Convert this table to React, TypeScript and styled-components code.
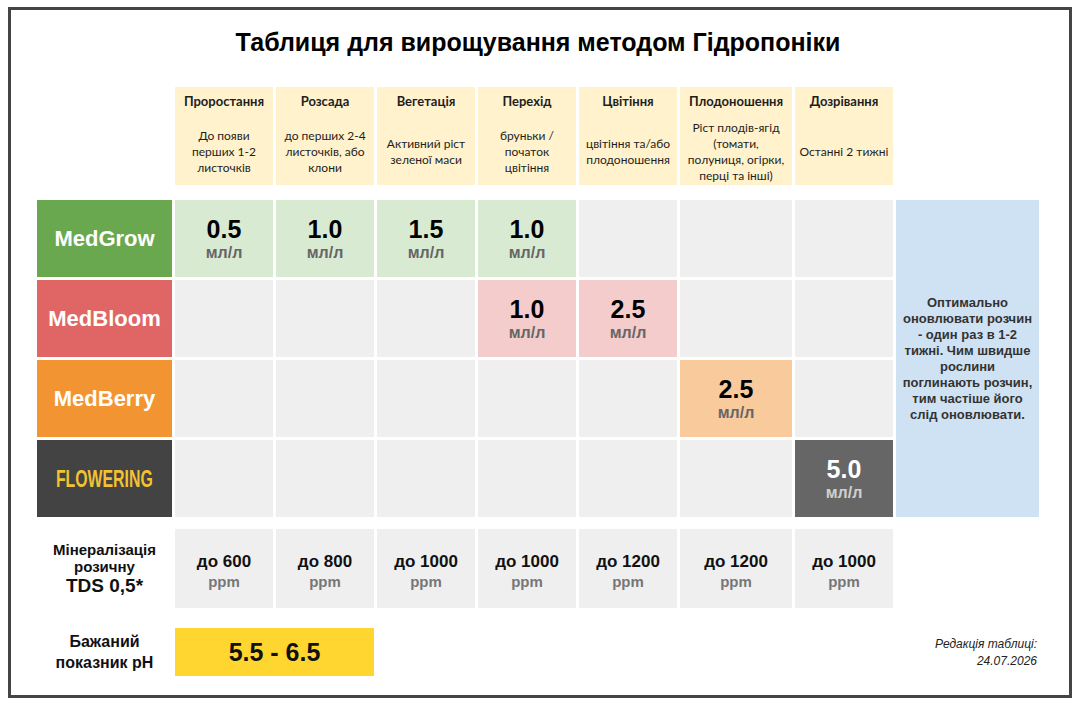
import styled, { createGlobalStyle } from "styled-components";

const GlobalStyle = createGlobalStyle`
  html, body {
    margin: 0;
    padding: 0;
    background: #ffffff;
  }
  body {
    font-family: "Liberation Sans", Arial, sans-serif;
    color: #111;
  }
`;

const columns = "135px repeat(5, 98px) 112px 98px 143px";

type Tone = "empty" | "grow" | "bloom" | "berry" | "dark";

const toneBg: Record<Tone, string> = {
  empty: "#efefef",
  grow: "#d9ead3",
  bloom: "#f4cccc",
  berry: "#f9cb9c",
  dark: "#666666",
};

const Frame = styled.div`
  box-sizing: border-box;
  height: 691px;
  margin: 7px 8px 8px;
  border: 3px solid #454545;
  padding: 0 30px 0 26px;
`;

const Title = styled.h1`
  margin: 0;
  padding-top: 17px;
  font-size: 25px;
  line-height: 30px;
  font-weight: 700;
  text-align: center;
  color: #000;
`;

const HeaderGrid = styled.div`
  display: grid;
  grid-template-columns: ${columns};
  grid-template-rows: 98px;
  column-gap: 3px;
  margin-top: 30px;
`;

const StageCell = styled.div<{ $col: number }>`
  grid-column: ${(p) => p.$col};
  background: #fff2cc;
  display: flex;
  flex-direction: column;
  align-items: center;
  padding-top: 6px;
  font-family: "Lato", "Open Sans", sans-serif;
  color: #1e1e1e;
  text-align: center;
`;

const StageName = styled.div`
  font-size: 13px;
  font-weight: 700;
  line-height: 16px;
`;

const StageDesc = styled.div`
  flex: 1;
  display: flex;
  align-items: center;
  justify-content: center;
  margin-top: 10px;
  font-size: 12px;
  line-height: 16px;
`;

const BodyGrid = styled.div`
  display: grid;
  grid-template-columns: ${columns};
  grid-template-rows: repeat(4, 77px);
  gap: 3px;
  margin-top: 15px;
`;

const Brand = styled.div<{ $bg: string; $row: number }>`
  grid-column: 1;
  grid-row: ${(p) => p.$row};
  background: ${(p) => p.$bg};
  display: flex;
  align-items: center;
  justify-content: center;
  color: #fff;
  font-size: 22px;
  font-weight: 700;
`;

const Flowering = styled.span`
  display: inline-block;
  font-size: 24px;
  font-weight: 700;
  color: #f1c232;
  transform: scaleX(0.66);
  white-space: nowrap;
`;

const Dose = styled.div<{ $tone: Tone; $row: number; $col: number }>`
  grid-column: ${(p) => p.$col};
  grid-row: ${(p) => p.$row};
  background: ${(p) => toneBg[p.$tone]};
  display: flex;
  flex-direction: column;
  align-items: center;
  justify-content: center;
  font-weight: 700;
  color: ${(p) => (p.$tone === "dark" ? "#ffffff" : "#000000")};
`;

const DoseValue = styled.div`
  font-size: 25px;
  line-height: 28px;
`;

const DoseUnit = styled.div<{ $light?: boolean }>`
  font-size: 16px;
  line-height: 20px;
  color: ${(p) => (p.$light ? "#d0d0d0" : "#666666")};
`;

const Note = styled.div`
  grid-column: 9;
  grid-row: 1 / span 4;
  background: #cfe2f3;
  display: flex;
  align-items: center;
  justify-content: center;
  text-align: center;
  font-size: 13px;
  font-weight: 700;
  line-height: 16px;
  color: #333;
  padding: 0 3px;
`;

const TdsGrid = styled.div`
  display: grid;
  grid-template-columns: ${columns};
  grid-template-rows: 79px;
  column-gap: 3px;
  margin-top: 12px;
`;

const RowLabel = styled.div`
  grid-column: 1;
  display: flex;
  flex-direction: column;
  align-items: center;
  justify-content: center;
  text-align: center;
  font-weight: 700;
  color: #111;
`;

const LabelLine = styled.div<{ $size: number; $lh: number }>`
  font-size: ${(p) => p.$size}px;
  line-height: ${(p) => p.$lh}px;
`;

const TdsCell = styled.div`
  background: #efefef;
  display: flex;
  flex-direction: column;
  align-items: center;
  justify-content: center;
  font-weight: 700;
  padding-top: 6px;
`;

const TdsValue = styled.div`
  font-size: 17px;
  line-height: 21px;
  color: #111;
`;

const TdsUnit = styled.div`
  font-size: 15px;
  line-height: 20px;
  color: #777;
`;

const PhGrid = styled.div`
  display: grid;
  grid-template-columns: ${columns};
  grid-template-rows: 48px;
  column-gap: 3px;
  margin-top: 20px;
`;

const PhBox = styled.div`
  grid-column: 2 / span 2;
  background: #ffd52f;
  display: flex;
  align-items: center;
  justify-content: center;
  font-size: 25px;
  font-weight: 700;
  color: #111;
`;

const Edition = styled.div`
  grid-column: 8 / span 2;
  display: flex;
  flex-direction: column;
  justify-content: center;
  align-items: flex-end;
  padding-right: 2px;
  padding-top: 2px;
  font-size: 12px;
  line-height: 17px;
  font-style: italic;
  color: #222;
`;

const stages = [
  { name: "Проростання", desc: ["До появи", "перших 1-2", "листочків"] },
  { name: "Розсада", desc: ["до перших 2-4", "листочків, або", "клони"] },
  { name: "Вегетація", desc: ["Активний ріст", "зеленої маси"] },
  { name: "Перехід", desc: ["бруньки /", "початок", "цвітіння"] },
  { name: "Цвітіння", desc: ["цвітіння та/або", "плодоношення"] },
  {
    name: "Плодоношення",
    desc: ["Ріст плодів-ягід", "(томати,", "полуниця, огірки,", "перці та інші)"],
  },
  { name: "Дозрівання", desc: ["Останні 2 тижні"] },
];

type Product = {
  name: string;
  bg: string;
  tone: Tone;
  doses: (string | null)[];
};

const products: Product[] = [
  { name: "MedGrow", bg: "#6aa84f", tone: "grow", doses: ["0.5", "1.0", "1.5", "1.0", null, null, null] },
  { name: "MedBloom", bg: "#e06666", tone: "bloom", doses: [null, null, null, "1.0", "2.5", null, null] },
  { name: "MedBerry", bg: "#f39433", tone: "berry", doses: [null, null, null, null, null, "2.5", null] },
  { name: "FLOWERING", bg: "#434343", tone: "dark", doses: [null, null, null, null, null, null, "5.0"] },
];

const tds = ["до 600", "до 800", "до 1000", "до 1000", "до 1200", "до 1200", "до 1000"];

const noteLines = [
  "Оптимально",
  "оновлювати розчин",
  "- один раз в 1-2",
  "тижні. Чим швидше",
  "рослини",
  "поглинають розчин,",
  "тим частіше його",
  "слід оновлювати.",
];

const Lines = ({ lines }: { lines: string[] }) => (
  <div>
    {lines.map((l, i) => (
      <div key={i}>{l}</div>
    ))}
  </div>
);

export default function App() {
  return (
    <>
      <GlobalStyle />
      <Frame>
        <Title>Таблиця для вирощування методом Гідропоніки</Title>

        <HeaderGrid>
          {stages.map((s, i) => (
            <StageCell key={s.name} $col={i + 2}>
              <StageName>{s.name}</StageName>
              <StageDesc>
                <Lines lines={s.desc} />
              </StageDesc>
            </StageCell>
          ))}
        </HeaderGrid>

        <BodyGrid>
          {products.map((p, r) => (
            <Brand key={p.name} $bg={p.bg} $row={r + 1}>
              {p.name === "FLOWERING" ? <Flowering>{p.name}</Flowering> : p.name}
            </Brand>
          ))}
          {products.map((p, r) =>
            p.doses.map((d, c) => (
              <Dose key={`${r}-${c}`} $tone={d ? p.tone : "empty"} $row={r + 1} $col={c + 2}>
                {d && (
                  <>
                    <DoseValue>{d}</DoseValue>
                    <DoseUnit $light={p.tone === "dark"}>мл/л</DoseUnit>
                  </>
                )}
              </Dose>
            ))
          )}
          <Note>
            <Lines lines={noteLines} />
          </Note>
        </BodyGrid>

        <TdsGrid>
          <RowLabel>
            <LabelLine $size={15} $lh={17}>Мінералізація</LabelLine>
            <LabelLine $size={15} $lh={17}>розичну</LabelLine>
            <LabelLine $size={19} $lh={22}>TDS 0,5*</LabelLine>
          </RowLabel>
          {tds.map((t, i) => (
            <TdsCell key={i}>
              <TdsValue>{t}</TdsValue>
              <TdsUnit>ppm</TdsUnit>
            </TdsCell>
          ))}
        </TdsGrid>

        <PhGrid>
          <RowLabel>
            <LabelLine $size={16} $lh={21}>Бажаний</LabelLine>
            <LabelLine $size={16} $lh={21}>показник pH</LabelLine>
          </RowLabel>
          <PhBox>5.5 - 6.5</PhBox>
          <Edition>
            <div>Редакція таблиці:</div>
            <div>24.07.2026</div>
          </Edition>
        </PhGrid>
      </Frame>
    </>
  );
}
